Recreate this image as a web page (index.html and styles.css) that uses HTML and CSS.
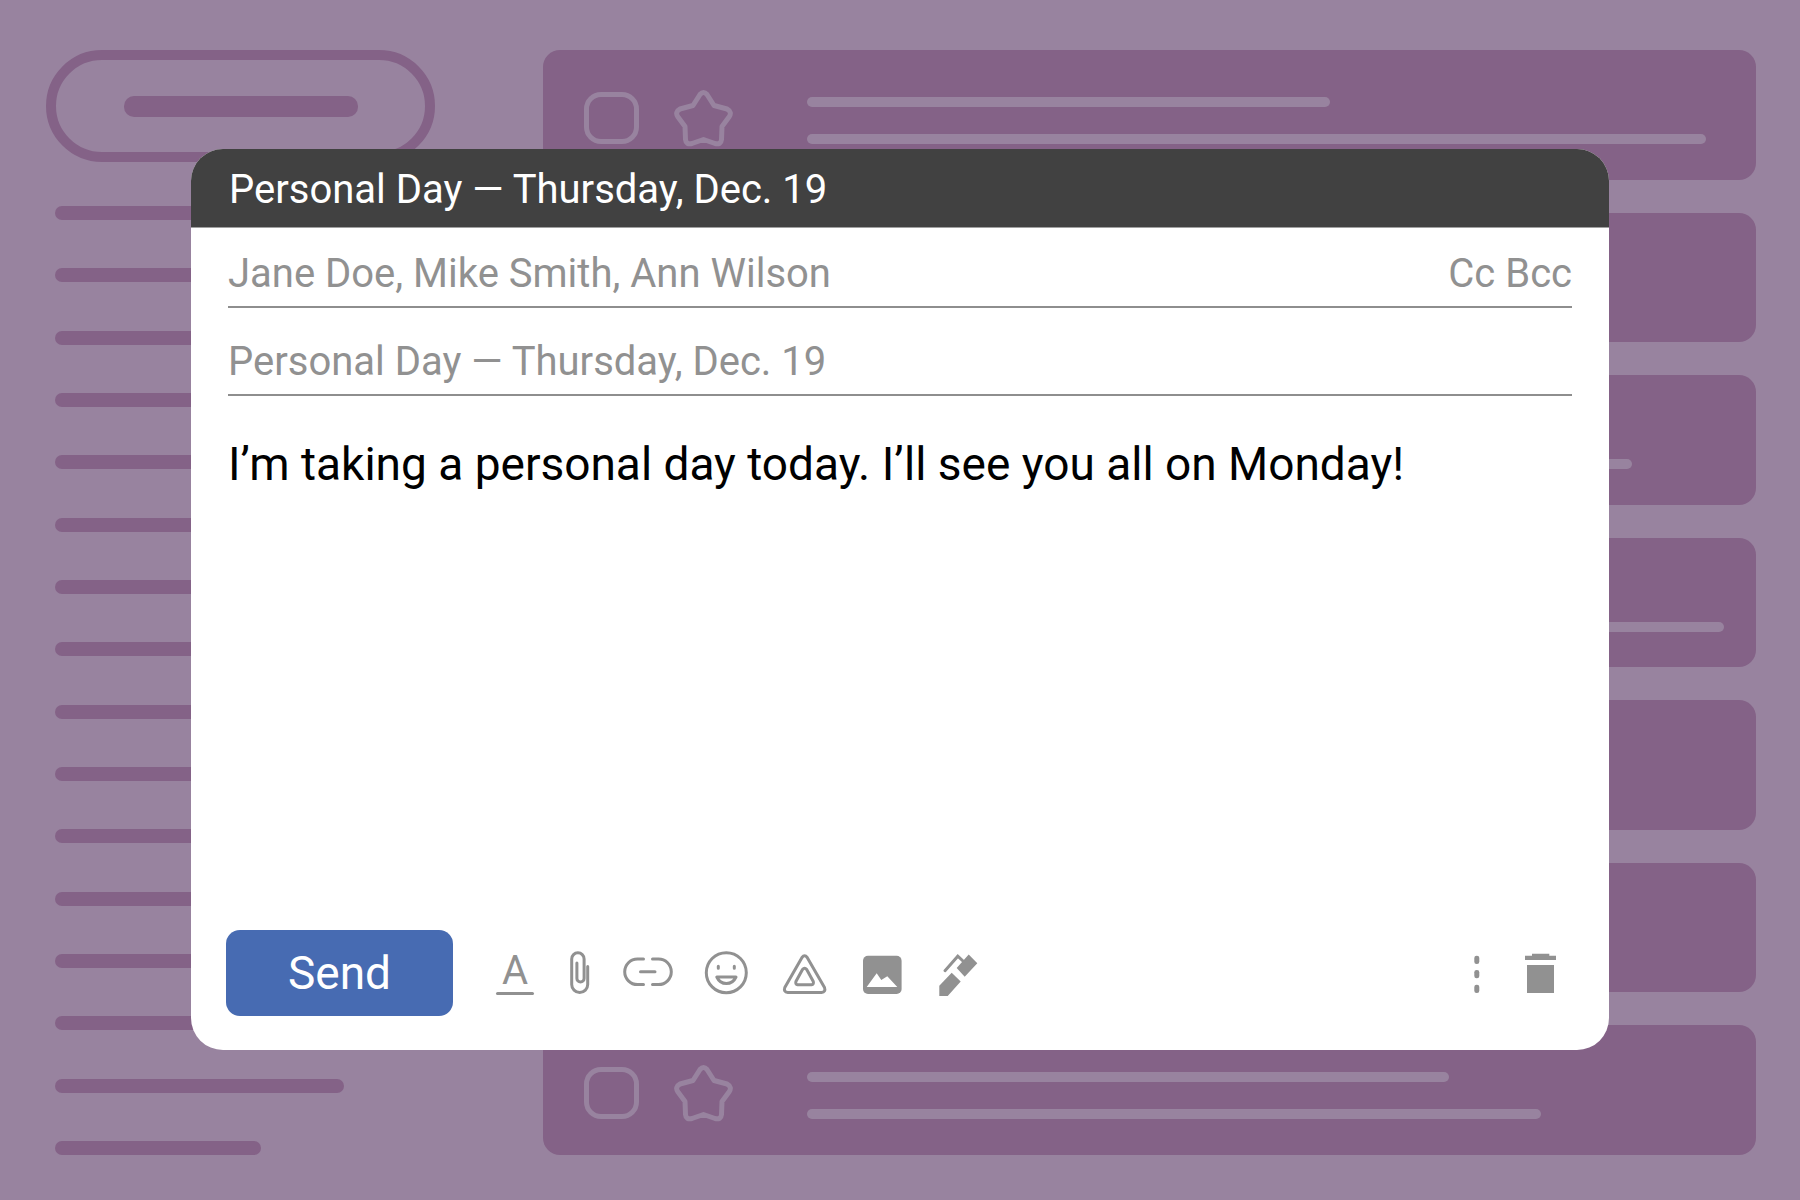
FILE: index.html
```html
<!DOCTYPE html>
<html lang="en">
<head>
    <meta charset="UTF-8">
    <meta name="viewport" content="width=device-width, initial-scale=1.0">
    <title>Personal Day — Thursday, Dec. 19</title>
    <link rel="stylesheet" href="styles.css">
</head>
<body>

<!-- star shape shared by the mail cards -->
<svg class="defs" aria-hidden="true">
    <symbol id="star" viewBox="0 0 60 58">
        <path d="M27 4.500 Q30.500 0.500 34 4.500 L41 15.500 L54 19 Q59.500 22 56 27 L49 36.500 L48.500 49.500 Q48 55 42 53.500 L30.500 49.500 L19 53.500 Q13 55 12.500 49.500 L12 36.500 L5 27 Q1.500 22 7 19 L20 15.500 Z"/>
    </symbol>
</svg>

<!-- inbox behind the compose window -->
<div class="inbox" aria-hidden="true">
    <div class="sidebar">
        <div class="pill"><span></span></div>
        <div class="folders">
            <span></span><span></span><span></span><span></span>
            <span></span><span></span><span></span><span></span>
            <span></span><span></span><span></span><span></span>
            <span></span><span></span>
            <span style="width: 87%"></span>
            <span style="width: 62%"></span>
        </div>
    </div>
    <div class="mails">
        <div class="mail">
            <span class="box"></span>
            <svg class="star"><use href="#star"/></svg>
            <div class="lines"><span style="width: 57%"></span><span style="width: 98%"></span></div>
        </div>
        <div class="mail">
            <span class="box"></span>
            <svg class="star"><use href="#star"/></svg>
            <div class="lines"><span style="width: 60%"></span><span style="width: 75%"></span></div>
        </div>
        <div class="mail">
            <span class="box"></span>
            <svg class="star"><use href="#star"/></svg>
            <div class="lines"><span style="width: 64%"></span><span style="width: 90%"></span></div>
        </div>
        <div class="mail">
            <span class="box"></span>
            <svg class="star"><use href="#star"/></svg>
            <div class="lines"><span style="width: 52%"></span><span style="width: 100%"></span></div>
        </div>
        <div class="mail">
            <span class="box"></span>
            <svg class="star"><use href="#star"/></svg>
            <div class="lines"><span style="width: 66%"></span><span style="width: 72%"></span></div>
        </div>
        <div class="mail">
            <span class="box"></span>
            <svg class="star"><use href="#star"/></svg>
            <div class="lines"><span style="width: 58%"></span><span style="width: 70%"></span></div>
        </div>
        <div class="mail">
            <span class="box"></span>
            <svg class="star"><use href="#star"/></svg>
            <div class="lines"><span style="width: 70%"></span><span style="width: 80%"></span></div>
        </div>
    </div>
</div>

<!-- compose window -->
<form class="compose">
    <h1 class="compose-title">Personal Day — Thursday, Dec. 19</h1>

    <div class="fields">
        <div class="field">
            <input type="text" aria-label="To" value="Jane Doe, Mike Smith, Ann Wilson">
            <button type="button">Cc</button>
            <button type="button">Bcc</button>
        </div>
        <div class="field subject">
            <input type="text" aria-label="Subject" value="Personal Day — Thursday, Dec. 19">
        </div>
        <textarea class="message" aria-label="Message" spellcheck="false">I’m taking a personal day today. I’ll see you all on Monday!</textarea>
    </div>

    <div class="toolbar">
        <button type="submit" class="send">Send</button>
        <div class="tools">
            <button type="button" aria-label="Formatting">
                <svg width="40" height="48" viewBox="0 0 40 48">
                    <text x="20" y="35" text-anchor="middle">A</text>
                    <path class="line" d="M2.500 44.500 H37.500"/>
                </svg>
            </button>
            <button type="button" aria-label="Attach file">
                <svg width="20" height="48" viewBox="0 0 20 48">
                    <path class="line" d="M18.700 17.500 V35.500 a8 8 0 0 1 -16 0 V10 a6.200 6.200 0 0 1 12.400 0 V29.500 a3.600 3.600 0 0 1 -7.200 0 V14"/>
                </svg>
            </button>
            <button type="button" aria-label="Insert link">
                <svg width="48" height="48" viewBox="0 0 48 48">
                    <path class="line" d="M20.500 10 H14.500 a12.800 12.800 0 0 0 0 25.600 H20.500 M29.500 10 H35.500 a12.800 12.800 0 0 1 0 25.600 H29.500 M17.500 22.800 H32"/>
                </svg>
            </button>
            <button type="button" aria-label="Insert emoji">
                <svg width="44" height="48" viewBox="0 0 44 48">
                    <circle class="line" cx="21.300" cy="23.700" r="20"/>
                    <path class="line" d="M13.300 17.300 v2 M29.300 17.300 v2 M11.800 28 H31 Q28 34.500 21.400 34.500 Q14.800 34.500 11.800 28 Z"/>
                </svg>
            </button>
            <button type="button" aria-label="Insert from drive">
                <svg width="44" height="48" viewBox="0 0 44 48">
                    <path class="line" d="M19 8.500 Q21.600 5 24.200 8.500 L41.500 38.500 Q43 43 38.500 43.400 H4.800 Q0.300 43 1.800 38.500 Z"/>
                    <path class="line" d="M19.500 20.500 Q21.600 18 23.700 20.500 L30.300 32.500 Q31 35.300 28.500 35.800 H14.700 Q12.200 35.300 12.900 32.500 Z"/>
                </svg>
            </button>
            <button type="button" aria-label="Insert photo">
                <svg width="42" height="48" viewBox="0 0 42 48">
                    <rect x="2" y="6.700" width="38.600" height="38.300" rx="5"/>
                    <path class="hole" d="M5.700 38 L15.700 24.300 L20.300 31 L26.300 27.300 L36.300 38 Z"/>
                </svg>
            </button>
            <button type="button" aria-label="Insert signature">
                <svg width="40" height="48" viewBox="0 0 40 48">
                    <path d="M2.300 47 V36.700 L14.700 23.700 L23.700 32.500 L10.700 47 Z M19.700 19 L31.700 5.500 L40.300 14.300 L27.700 27.700 Z"/>
                    <path class="clip" d="M8 21.700 L20.800 7.200 L26 12"/>
                </svg>
            </button>
        </div>
        <div class="actions">
            <button type="button" aria-label="More options">
                <svg width="8" height="48" viewBox="0 0 8 48">
                    <rect x="1.300" y="6.700" width="5" height="8.300" rx="2.300"/>
                    <rect x="1.300" y="21" width="5" height="8.300" rx="2.300"/>
                    <rect x="1.300" y="35.700" width="5" height="8.300" rx="2.300"/>
                </svg>
            </button>
            <button type="button" aria-label="Discard draft">
                <svg width="32" height="48" viewBox="0 0 32 48">
                    <path d="M0 6.700 H7 V4.700 H24.300 V6.700 H31 V11 H0 Z M2 16 H29 V44 H2 Z"/>
                </svg>
            </button>
        </div>
    </div>
</form>

</body>
</html>
```
FILE: styles.css
```css
* {
    box-sizing: border-box;
}

body {
    margin: 0;
    min-height: 100vh;
    display: flex;
    background-color: #98839f;
    font-family: Roboto, sans-serif;
    font-size: 40px;
}

button, input, textarea {
    margin: 0;
    padding: 0;
    border: none;
    background: none;
    font: inherit;
    color: inherit;
}

button {
    cursor: pointer;
}

.defs {
    display: none;
}

/* inbox */
.inbox {
    flex: 1;
    display: flex;
    gap: 108px;
    padding: 50px 44px 45px 46px;
}

.sidebar {
    width: 389px;
    display: flex;
    flex-direction: column;
    gap: 44px;
}

.pill {
    height: 112px;
    display: flex;
    align-items: center;
    justify-content: center;
    border: 10px solid #846287;
    border-radius: 56px;
}

.pill span {
    width: 234px;
    height: 21px;
    border-radius: 10px;
    background-color: #846287;
}

.folders {
    flex: 1;
    display: flex;
    flex-direction: column;
    justify-content: space-between;
    padding: 0 48px 0 9px;
}

.folders span {
    height: 14px;
    border-radius: 7px;
    background-color: #846287;
}

.mails {
    flex: 1;
    display: flex;
    flex-direction: column;
    gap: 33px;
}

.mail {
    flex: 1;
    display: flex;
    align-items: flex-start;
    padding: 40px 32px 0 41px;
    border-radius: 17px;
    background-color: #846287;
}

.box {
    width: 55px;
    height: 52px;
    margin-top: 2px;
    border: 5px solid #98839f;
    border-radius: 17px;
}

.star {
    width: 60px;
    height: 58px;
    margin: 0 74px 0 34px;
    overflow: visible;
    fill: none;
    stroke: #98839f;
    stroke-width: 5;
    stroke-linejoin: round;
}

.lines {
    flex: 1;
    display: flex;
    flex-direction: column;
    gap: 27px;
    padding-top: 7px;
}

.lines span {
    height: 10px;
    border-radius: 5px;
    background-color: #98839f;
}

/* compose window */
.compose {
    position: absolute;
    inset: 149px 191px 150px;
    display: flex;
    flex-direction: column;
    overflow: hidden;
    border-radius: 32px;
    background-color: #fff;
    color: #919191;
}

.compose-title {
    margin: 0;
    padding: 4px 38px 0;
    border-bottom: 1px solid #a0a0a0;
    background-color: #414141;
    color: #fff;
    font-size: 40px;
    font-weight: 400;
    line-height: 74px;
}

.fields {
    flex: 1;
    display: flex;
    flex-direction: column;
    padding: 0 37px;
}

.field {
    height: 80px;
    display: flex;
    align-items: center;
    gap: 10px;
    padding-top: 12px;
    border-bottom: 2px solid #8e8e8e;
}

.field input {
    flex: 1;
    min-width: 0;
}

.subject {
    height: 88px;
    padding-top: 20px;
}

.message {
    flex: 1;
    padding-top: 40px;
    color: #000;
    font-size: 46px;
    line-height: 56px;
    resize: none;
}

.toolbar {
    display: flex;
    align-items: center;
    padding: 0 52px 34px 35px;
}

.send {
    width: 227px;
    height: 86px;
    border-radius: 14px;
    background-color: #476bb2;
    color: #fff;
    font-size: 46px;
}

.tools, .actions {
    display: flex;
    gap: 34px;
}

.tools {
    flex: 1;
    padding-left: 42px;
}

.actions {
    gap: 44px;
}

.toolbar svg {
    display: block;
    overflow: visible;
    fill: #919191;
}

.toolbar .line, .toolbar .clip {
    fill: none;
    stroke: #919191;
    stroke-width: 3;
    stroke-linecap: round;
    stroke-linejoin: round;
}

.toolbar .clip {
    stroke-linejoin: miter;
}

.toolbar .hole {
    fill: #fff;
}
```
